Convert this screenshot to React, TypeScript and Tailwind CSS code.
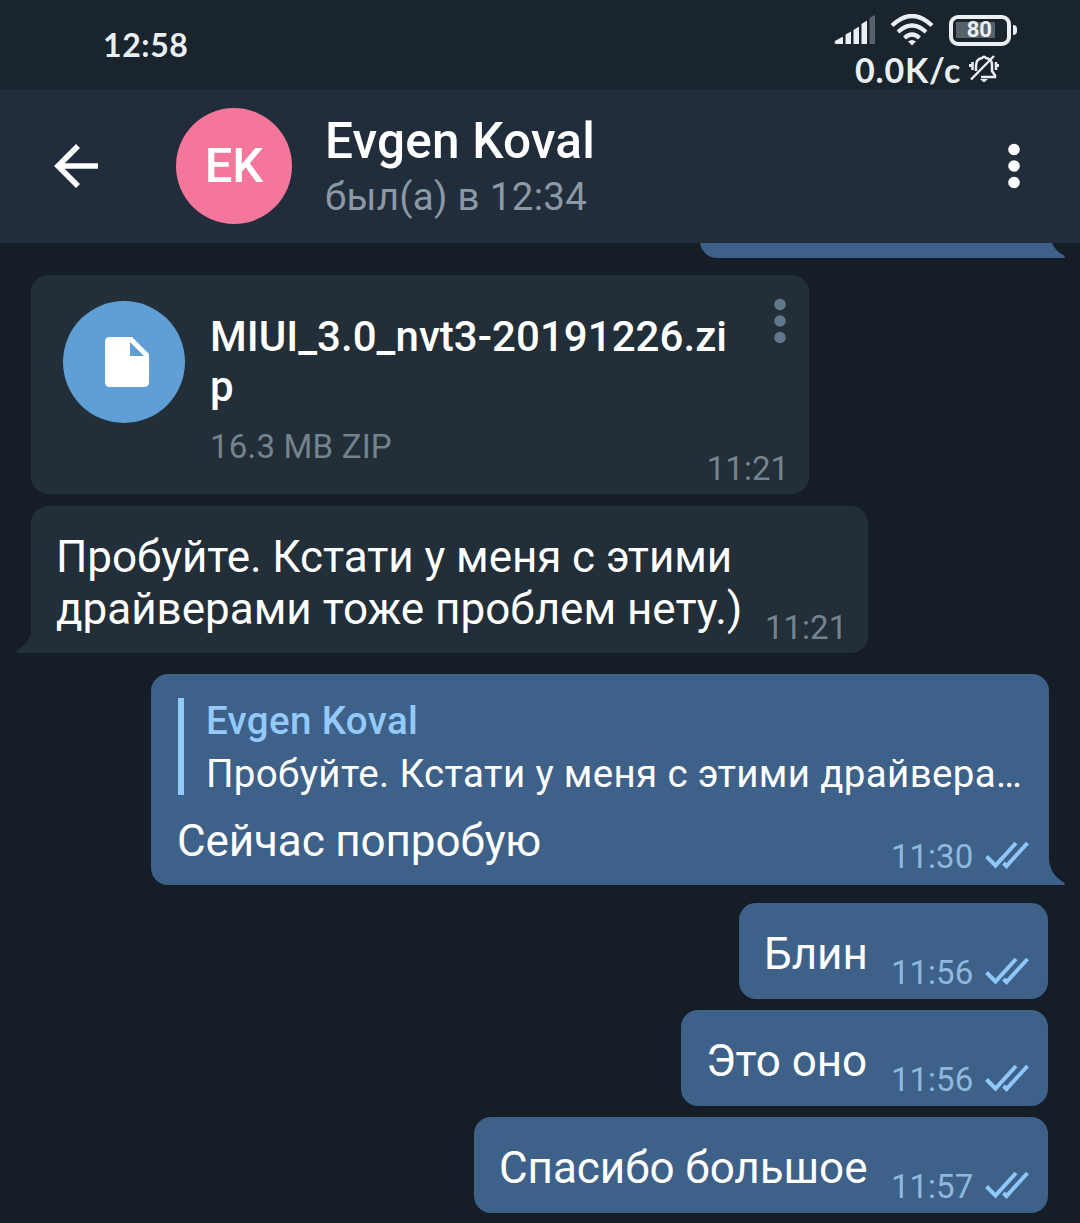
import React from 'react';
import clsx from 'clsx';

type BubbleProps = {
  out?: boolean;
  tail?: boolean;
  className?: string;
  children?: React.ReactNode;
};

function Tail({ out }: { out?: boolean }) {
  return (
    <svg
      viewBox="0 0 32 44"
      className={clsx(
        'absolute bottom-0 h-11 w-8',
        out ? '-right-4 fill-[#3e6189]' : '-left-[15px] -scale-x-100 fill-[#222e38]'
      )}
    >
      <path d="M0 0H16V18C16.500 28 22 37 31 41.500Q32.500 43 31 44H0Z" />
    </svg>
  );
}

function Bubble({ out, tail, className, children }: BubbleProps) {
  return (
    <div
      className={clsx(
        'relative flex rounded-[17px]',
        out ? 'self-end bg-[#3e6189]' : 'ml-[31px] self-start bg-[#222e38]',
        out && (tail ? 'mr-[31px]' : 'mr-8'),
        tail && (out ? 'rounded-br-none' : 'rounded-bl-none'),
        className
      )}
    >
      {tail && <Tail out={out} />}
      {children}
    </div>
  );
}

function Dots({ className }: { className?: string }) {
  return (
    <svg viewBox="0 0 12 46" className={clsx('h-[46px] w-3 shrink-0', className)}>
      <circle cx="6" cy="6.500" r="5.800" />
      <circle cx="6" cy="23" r="5.800" />
      <circle cx="6" cy="39.500" r="5.800" />
    </svg>
  );
}

function Checks() {
  return (
    <svg viewBox="0 0 44 28" className="mb-1 h-7 w-11 fill-none stroke-[#8fc7fb] stroke-[4]">
      <path d="M1.500 15.500L10.500 24.500L31 2M18.500 22L21.500 25L42.500 2" />
    </svg>
  );
}

function SentAt({ time }: { time: string }) {
  return (
    <div className="flex items-center text-[#8fb8de]">
      <span className="w-[94px] text-[33px] leading-10">{time}</span>
      <Checks />
    </div>
  );
}

const shortMessages = [
  { text: 'Блин', time: '11:56', width: 'w-[309px]' },
  { text: 'Это оно', time: '11:56', width: 'w-[367px]' },
  { text: 'Спасибо большое', time: '11:57', width: 'w-[574px]' },
];

function StatusBar() {
  return (
    <div className="flex h-[89px] justify-between bg-[#1a242d] pl-[103px] text-[#e9eff3]">
      <span className="mt-[25px] font-[Lato] text-[32px] leading-10 font-bold tracking-[0.6px]">12:58</span>
      <div className="mt-[14px] mr-[62px] flex w-[184px] flex-col">
        <div className="flex h-8 items-center">
          <svg viewBox="0 0 42 32" className="h-8 w-[42px] shrink-0 fill-[#e9eff3]">
            <path d="M1 27L8 23Q9 22.500 9 24V30H2Q0 30 1 27Z" />
            <path d="M11.500 20.500L17 17.500V30H11.500ZM19.500 16L25 12.500V30H19.500ZM27.500 10L33 6.500V30H27.500Z" />
            <path d="M35.500 4L41 1V30H35.500Z" className="fill-[#59626b]" />
          </svg>
          <svg viewBox="0 0 44 32" className="ml-[14px] h-8 w-11 shrink-0 fill-none stroke-[#e9eff3] stroke-[4.200]">
            <path d="M2 11.500Q22-7.500 42 11.500M8 18Q22 5 36 18M14.500 24Q22 17 29.500 24" />
            <path d="M18 27.500Q22 24.500 26 27.500L22 31.500Z" className="fill-[#e9eff3] stroke-none" />
          </svg>
          <div className="ml-[15px] flex h-[31px] w-[62px] shrink-0 items-center rounded-[9px] border-4 border-[#e9eff3] px-[3px]">
            <div className="flex h-4 w-[39px] items-center justify-end bg-[#59626b] pr-[3px]">
              <span className="font-[Roboto] text-[22px] leading-4 font-bold">80</span>
            </div>
          </div>
          <div className="ml-0.5 h-2.5 w-1 shrink-0 rounded-r-sm bg-[#e9eff3]" />
        </div>
        <div className="mt-1 flex items-center pl-[21px]">
          <span className="w-[106px] font-[Lato] text-[34px] leading-10 font-bold tracking-[0.8px]">0.0K/c</span>
          <svg viewBox="0 0 30 30" className="mb-1 ml-2 h-[30px] w-[30px] shrink-0 fill-none stroke-[#e9eff3] stroke-[2.500]">
            <path d="M7 18V13Q7 6 13 5Q15 2.500 17 5Q23 6 23 12V18L26 22.500V24H12" />
            <path d="M2 26.500L25 3M3.500 9V17M1 11V14M27 9V17M29.500 11V14" />
            <path d="M11 26H19L15 29.500Z" className="fill-[#e9eff3] stroke-none" />
          </svg>
        </div>
      </div>
    </div>
  );
}

function Header() {
  return (
    <div className="flex h-[154px] items-center bg-[#212d3a] pl-[54px]">
      <svg viewBox="0 0 44 44" className="h-11 w-11 fill-none stroke-white stroke-[5.600]">
        <path d="M24 2L4 22L24 42M4 22H44" />
      </svg>
      <div className="ml-[78px] flex size-[116px] items-center justify-center rounded-full bg-[#f5769b] text-[49px] font-medium text-white">
        EK
      </div>
      <div className="ml-[33px] grow pt-1">
        <div className="text-[49.500px] leading-[54px] font-medium tracking-[0.2px] text-white">Evgen Koval</div>
        <div className="mt-1 text-[38.500px] leading-[50px] tracking-[0.3px] text-[#8b98a5]">был(а) в 12:34</div>
      </div>
      <Dots className="mr-[60px] fill-white" />
    </div>
  );
}

export default function App() {
  return (
    <div className="flex h-[1223px] w-[1080px] flex-col overflow-hidden bg-[#151e26] font-[Roboto,sans-serif]">
      <StatusBar />
      <Header />

      <div className="flex grow flex-col overflow-hidden">
        <Bubble out tail className="-mt-11 h-[59px] w-[349px]" />

        <Bubble className="mt-[17px] h-[219px] w-[778px] pt-[26px] pl-8">
          <div className="flex size-[122px] shrink-0 items-center justify-center rounded-full bg-[#5f9fd5]">
            <svg viewBox="0 0 44 50" className="ml-1.5 h-[50px] w-11 fill-white">
              <path fillRule="evenodd" d="M5 0H27L44 17V45Q44 50 39 50H5Q0 50 0 45V5Q0 0 5 0ZM25 5V19H39Z" />
            </svg>
          </div>
          <div className="mt-[11px] ml-[25px] w-[525px]">
            <div className="text-[42px] leading-[50px] font-medium tracking-[0.050px] text-white">
              MIUI_3.0_nvt3-20191226.zi
              <br />p
            </div>
            <div className="mt-[15px] text-[33px] leading-10 tracking-[0.2px] text-[#75838f]">16.3 MB ZIP</div>
          </div>
          <div className="flex w-20 flex-col items-end justify-between pr-5 pb-[5px]">
            <Dots className="-mt-[3px] mr-[3px] fill-[#62768c]" />
            <span className="text-[33px] leading-10 text-[#75838f]">11:21</span>
          </div>
        </Bubble>

        <Bubble tail className="mt-3 h-[147px] w-[837px] pt-[25px] pl-[25px]">
          <div className="w-[709px] text-[44px] leading-[52px] text-white">
            <span className="tracking-[-0.070px]">Пробуйте. Кстати у меня с этими</span>
            <br />
            драйверами тоже проблем нету.)
          </div>
          <span className="mb-[5px] self-end text-[33px] leading-10 text-[#75838f]">11:21</span>
        </Bubble>

        <Bubble out tail className="mt-[21px] h-[211px] w-[898px] flex-col pt-6 pl-[27px]">
          <div className="h-[97px] w-[850px] border-l-[6px] border-[#93c9fb] pl-[22px]">
            <div className="text-[38.500px] leading-[46px] font-medium tracking-[0.350px] text-[#93c9fb]">
              Evgen Koval
            </div>
            <div className="mt-[7px] text-[38.500px] leading-[46px] tracking-[0.350px] whitespace-nowrap text-white">
              Пробуйте. Кстати у меня с этими драйвера…
            </div>
          </div>
          <div className="-ml-px mt-5 flex justify-between pr-5">
            <span className="text-[44px] leading-[52px] tracking-[-0.120px] text-white">Сейчас попробую</span>
            <div className="mt-[22px]">
              <SentAt time="11:30" />
            </div>
          </div>
        </Bubble>

        <div className="mt-[18px] flex flex-col gap-[11px]">
          {shortMessages.map((m) => (
            <Bubble key={m.text} out className={clsx('h-24 shrink-0 justify-between pr-[19px] pl-[25px]', m.width)}>
              <span className="mt-[25px] text-[44px] leading-[52px] tracking-[-0.050px] whitespace-nowrap text-white">
                {m.text}
              </span>
              <div className="mt-[50px]">
                <SentAt time={m.time} />
              </div>
            </Bubble>
          ))}
        </div>
      </div>
    </div>
  );
}
